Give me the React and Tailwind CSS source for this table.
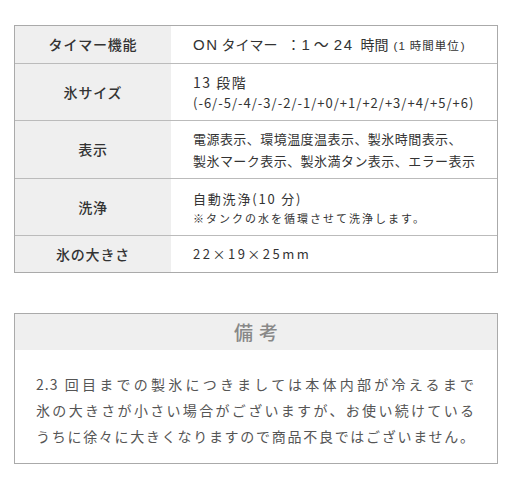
export default function App() {
  const font = { fontFamily: '"Noto Sans CJK JP", "Noto Sans", sans-serif' };
  const latin = { fontFamily: '"Liberation Sans", Arial, sans-serif' };
  const rows = [
    {
      label: 'タイマー機能',
      h: 'h-[37px]',
      value: (
        <div className="text-[14px] whitespace-nowrap leading-[20px]">
          <span style={latin} className="text-[15px] tracking-[1.5px]">ON</span>
          <span className="ml-[3px]">タイマー</span>
          <span className="ml-[9px]">：</span>
          <span style={latin} className="text-[15px] ml-[1px]">1</span>
          <span className="ml-[4px] text-[15px]">～</span>
          <span style={latin} className="text-[15px] ml-[5px] tracking-[1.5px]">24</span>
          <span className="ml-[7px]">時間</span>
          <span className="ml-[5px] text-[11.5px]">
            <span style={latin} className="tracking-[1px]">(1</span>
            <span className="ml-[4px] tracking-[1px]">時間単位</span>
            <span style={latin} className="ml-[1px]">)</span>
          </span>
        </div>
      ),
    },
    {
      label: '氷サイズ',
      h: 'h-[57px]',
      value: (
        <div className="flex flex-col">
          <div className="text-[14px] leading-[22px] tracking-[1.5px]">13 段階</div>
          <div className="text-[13px] leading-[20px] tracking-[1px]">(-6/-5/-4/-3/-2/-1/+0/+1/+2/+3/+4/+5/+6)</div>
        </div>
      ),
    },
    {
      label: '表示',
      h: 'h-[58px]',
      value: (
        <div className="flex flex-col text-[13px] leading-[22px] tracking-[0.45px]">
          <div>電源表示、環境温度温表示、製氷時間表示、</div>
          <div>製氷マーク表示、製氷満タン表示、エラー表示</div>
        </div>
      ),
    },
    {
      label: '洗浄',
      h: 'h-[57px]',
      value: (
        <div className="flex flex-col">
          <div className="text-[13px] leading-[21px] tracking-[1.8px]">自動洗浄(10 分)</div>
          <div className="text-[11px] leading-[18px] tracking-[2px]">※タンクの水を循環させて洗浄します。</div>
        </div>
      ),
    },
    {
      label: '氷の大きさ',
      h: 'h-[37px]',
      value: <div className="text-[13px] tracking-[2.5px]">22×19×25mm</div>,
    },
  ];
  return (
    <div className="w-[512px] h-[489px] bg-white text-[#333]" style={font}>
      <div className="pt-[25px] px-[14px]">
        <div className="border-[1.5px] border-[#aaa] flex flex-col">
          {rows.map((r, i) => (
            <div
              key={i}
              className={`flex ${r.h} ${i > 0 ? 'border-t-[1.5px] border-[#bbb]' : ''}`}
            >
              <div className="w-[156px] shrink-0 bg-[#efefef] flex items-center justify-center text-[14px] tracking-[0.8px] font-medium">
                {r.label}
              </div>
              <div className="flex-1 flex items-center pl-[22px]">{r.value}</div>
            </div>
          ))}
        </div>
        <div className="mt-[40px] border-[1.5px] border-[#aaa] h-[151px] flex flex-col">
          <div className="h-[36px] bg-[#efefef] flex items-center justify-center text-[19px] text-[#888] tracking-[6px] pl-[6px] font-medium">
            備考
          </div>
          <div className="pl-[21px] pt-[21px] w-[460px] text-[14px] leading-[26px] tracking-[1px] text-[#555] [text-align-last:justify] text-justify">
            <div>2.3 回目までの製氷につきましては本体内部が冷えるまで</div>
            <div>氷の大きさが小さい場合がございますが、お使い続けている</div>
            <div>うちに徐々に大きくなりますので商品不良ではございません。</div>
          </div>
        </div>
      </div>
    </div>
  );
}
